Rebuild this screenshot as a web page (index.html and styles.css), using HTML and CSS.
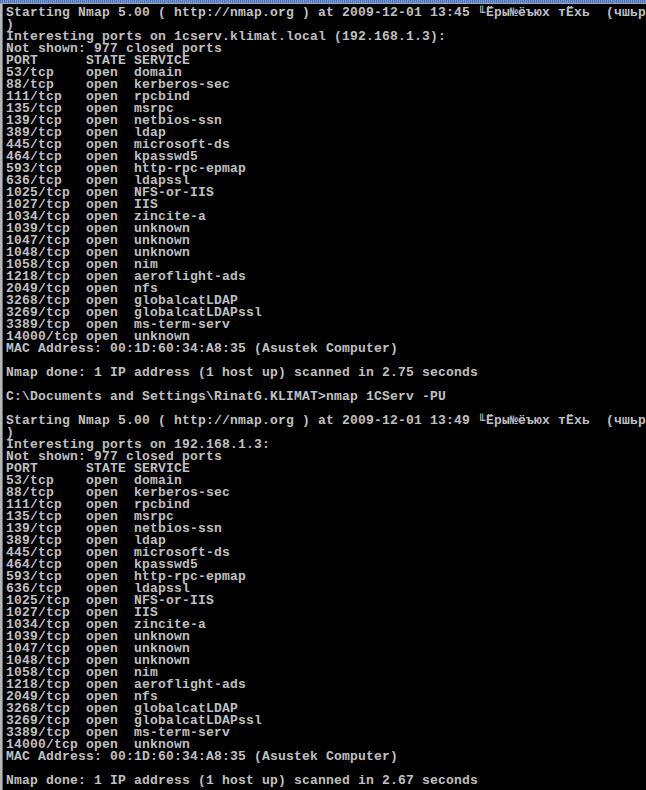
FILE: index.html
```html
<!DOCTYPE html>
<html>
<head>
<meta charset="utf-8">
<link rel="stylesheet" href="styles.css">
</head>
<body>
<div class="window">
<div class="titleedge"></div>
<div class="console">
<pre class="screen">Starting Nmap 5.00 ( http://nmap.org ) at 2009-12-01 13:45 ╙Ёры№ёъюх тЁхь&nbsp; (чшьр
)
Interesting ports on 1cserv.klimat.local (192.168.1.3):
Not shown: 977 closed ports
PORT      STATE SERVICE
53/tcp    open  domain
88/tcp    open  kerberos-sec
111/tcp   open  rpcbind
135/tcp   open  msrpc
139/tcp   open  netbios-ssn
389/tcp   open  ldap
445/tcp   open  microsoft-ds
464/tcp   open  kpasswd5
593/tcp   open  http-rpc-epmap
636/tcp   open  ldapssl
1025/tcp  open  NFS-or-IIS
1027/tcp  open  IIS
1034/tcp  open  zincite-a
1039/tcp  open  unknown
1047/tcp  open  unknown
1048/tcp  open  unknown
1058/tcp  open  nim
1218/tcp  open  aeroflight-ads
2049/tcp  open  nfs
3268/tcp  open  globalcatLDAP
3269/tcp  open  globalcatLDAPssl
3389/tcp  open  ms-term-serv
14000/tcp open  unknown
MAC Address: 00:1D:60:34:A8:35 (Asustek Computer)

Nmap done: 1 IP address (1 host up) scanned in 2.75 seconds

C:\Documents and Settings\RinatG.KLIMAT&gt;nmap 1CServ -PU

Starting Nmap 5.00 ( http://nmap.org ) at 2009-12-01 13:49 ╙Ёры№ёъюх тЁхь&nbsp; (чшьр
)
Interesting ports on 192.168.1.3:
Not shown: 977 closed ports
PORT      STATE SERVICE
53/tcp    open  domain
88/tcp    open  kerberos-sec
111/tcp   open  rpcbind
135/tcp   open  msrpc
139/tcp   open  netbios-ssn
389/tcp   open  ldap
445/tcp   open  microsoft-ds
464/tcp   open  kpasswd5
593/tcp   open  http-rpc-epmap
636/tcp   open  ldapssl
1025/tcp  open  NFS-or-IIS
1027/tcp  open  IIS
1034/tcp  open  zincite-a
1039/tcp  open  unknown
1047/tcp  open  unknown
1048/tcp  open  unknown
1058/tcp  open  nim
1218/tcp  open  aeroflight-ads
2049/tcp  open  nfs
3268/tcp  open  globalcatLDAP
3269/tcp  open  globalcatLDAPssl
3389/tcp  open  ms-term-serv
14000/tcp open  unknown
MAC Address: 00:1D:60:34:A8:35 (Asustek Computer)

Nmap done: 1 IP address (1 host up) scanned in 2.67 seconds</pre>
</div>
</div>
</body>
</html>
```
FILE: styles.css
```css
html, body {
  margin: 0;
  padding: 0;
  background: #000000;
  height: 100%;
  overflow: hidden;
}

.window {
  display: flex;
  flex-direction: column;
  height: 790px;
  background: #000000;
}

.titleedge {
  height: 3px;
  flex: none;
  background: repeating-linear-gradient(90deg, #4f72b4 0 1px, #7d98cc 1px 2px);
  border-bottom: 1px solid #9aa6b8;
}

.console {
  flex: 1;
  border-left: 2px solid #b8b8b8;
  box-shadow: inset 1px 0 0 #6e6e6e;
  padding: 3px 0 0 4px;
  overflow: hidden;
}

.screen {
  margin: 0;
  font-family: "Liberation Mono", "DejaVu Sans Mono", monospace;
  font-size: 13px;
  font-weight: bold;
  letter-spacing: 0.2px;
  line-height: 12px;
  color: #c0c0c0;
  white-space: pre;
}
```
